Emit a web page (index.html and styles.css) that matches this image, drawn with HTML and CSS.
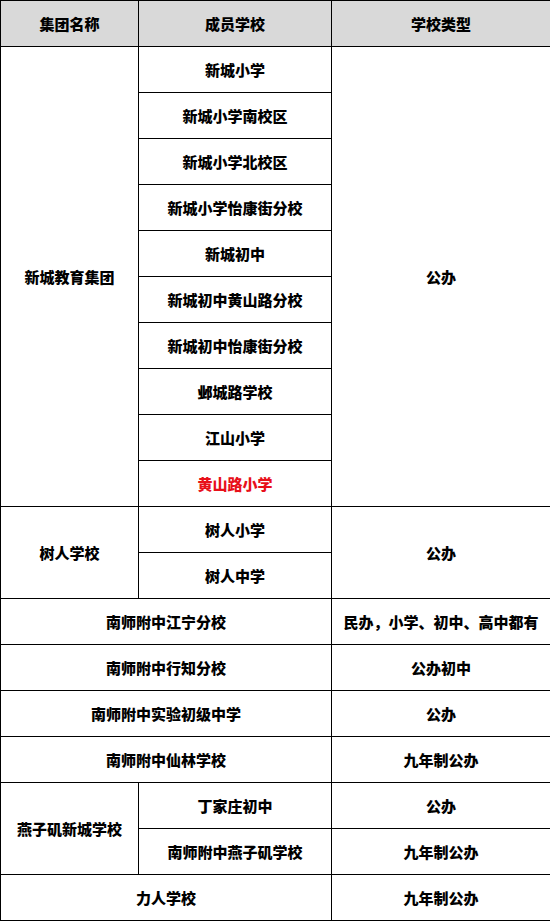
FILE: index.html
```html
<!DOCTYPE html>
<html lang="zh">
<head>
<meta charset="utf-8">
<link rel="stylesheet" href="styles.css">
</head>
<body>
<table class="schools">
  <colgroup>
    <col class="c1"><col class="c2"><col class="c3">
  </colgroup>
  <thead>
    <tr><th>集团名称</th><th>成员学校</th><th>学校类型</th></tr>
  </thead>
  <tbody>
    <tr><td rowspan="10">新城教育集团</td><td>新城小学</td><td rowspan="10">公办</td></tr>
    <tr><td>新城小学南校区</td></tr>
    <tr><td>新城小学北校区</td></tr>
    <tr><td>新城小学怡康街分校</td></tr>
    <tr><td>新城初中</td></tr>
    <tr><td>新城初中黄山路分校</td></tr>
    <tr><td>新城初中怡康街分校</td></tr>
    <tr><td>邺城路学校</td></tr>
    <tr><td>江山小学</td></tr>
    <tr><td class="red">黄山路小学</td></tr>
    <tr><td rowspan="2">树人学校</td><td>树人小学</td><td rowspan="2">公办</td></tr>
    <tr><td>树人中学</td></tr>
    <tr><td colspan="2">南师附中江宁分校</td><td>民办，小学、初中、高中都有</td></tr>
    <tr><td colspan="2">南师附中行知分校</td><td>公办初中</td></tr>
    <tr><td colspan="2">南师附中实验初级中学</td><td>公办</td></tr>
    <tr><td colspan="2">南师附中仙林学校</td><td>九年制公办</td></tr>
    <tr><td rowspan="2">燕子矶新城学校</td><td>丁家庄初中</td><td>公办</td></tr>
    <tr><td>南师附中燕子矶学校</td><td>九年制公办</td></tr>
    <tr><td colspan="2">力人学校</td><td>九年制公办</td></tr>
  </tbody>
</table>
</body>
</html>
```
FILE: styles.css
```css
html, body {
  margin: 0;
  padding: 0;
  background: #fff;
}
.schools {
  border-collapse: collapse;
  table-layout: fixed;
  width: 550px;
  font-family: "Noto Sans CJK SC", "Noto Sans", sans-serif;
  font-weight: 900;
  font-size: 15px;
  color: #000;
}
.c1 { width: 138px; }
.c2 { width: 193px; }
.c3 { width: 219px; }
.schools th,
.schools td {
  border: 1px solid #000;
  height: 46px;
  padding: 0;
  text-align: center;
  vertical-align: middle;
  line-height: 20px;
  box-sizing: border-box;
}
.schools th {
  background: #d9d9d9;
  font-weight: 900;
}
.schools .red {
  color: #e8101a;
}
```
